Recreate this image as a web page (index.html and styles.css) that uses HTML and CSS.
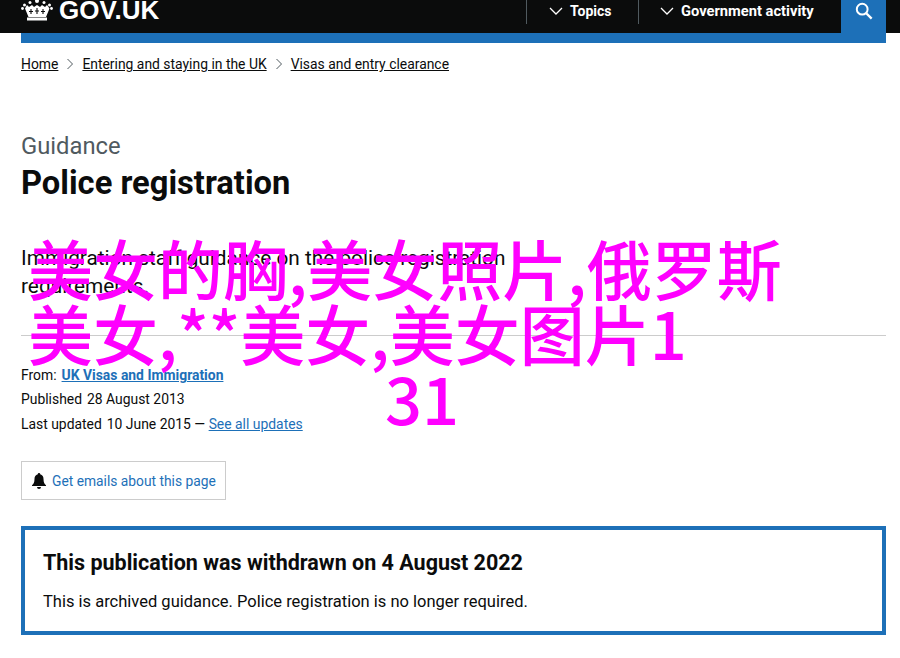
FILE: index.html
```html
<!DOCTYPE html>
<html lang="en">
<head>
<meta charset="utf-8">
<title>Police registration - GOV.UK</title>
<link rel="stylesheet" href="styles.css">
</head>
<body>
<header class="header">
  <a class="logo" href="#">
    <svg class="crown" viewBox="0 0 32 22" aria-hidden="true">
      <g fill="#fff">
        <circle cx="16" cy="2" r="2"/><circle cx="9" cy="3.5" r="1.5"/><circle cx="23" cy="3.5" r="1.5"/>
        <circle cx="3.5" cy="6" r="1.5"/><circle cx="28.5" cy="6" r="1.5"/><circle cx="1.5" cy="9.5" r="1.4"/><circle cx="30.5" cy="9.5" r="1.4"/>
        <path d="M6 6l2 2 3-2 2 2 3-2 3 2 2-2 3 2 2-2 2.500 3.500-3.500 8.500H7.500L4 9.500z"/>
        <rect x="6" y="18.500" width="20" height="3"/>
      </g>
      <g fill="none" stroke="#0b0c0c" stroke-width="1.100">
        <path d="M10 10v5M8 12.500h4M16 9v6M14 12h4M22 10v5M20 12.500h4"/>
      </g>
    </svg>
    <span class="logo-text">GOV.UK</span>
  </a>
  <nav class="nav">
    <a class="nav-item nav-topics" href="#">
      <svg class="chevron" viewBox="0 0 14 8" aria-hidden="true"><path d="M1 1l6 6 6-6" fill="none" stroke="#fff" stroke-width="1.300"/></svg>
      Topics
    </a>
    <a class="nav-item nav-gov" href="#">
      <svg class="chevron" viewBox="0 0 14 8" aria-hidden="true"><path d="M1 1l6 6 6-6" fill="none" stroke="#fff" stroke-width="1.300"/></svg>
      Government activity
    </a>
    <button class="search" aria-label="Search">
      <svg class="search-icon" viewBox="0 0 20 20" aria-hidden="true"><circle cx="8" cy="8" r="6" fill="none" stroke="#fff" stroke-width="2.200"/><path d="M12.500 12.500l6 6" stroke="#fff" stroke-width="2.600"/></svg>
    </button>
  </nav>
</header>
<div class="blue-bar"></div>
<main class="main">
  <nav class="crumbs">
    <a href="#">Home</a>
    <svg class="crumb-sep" viewBox="0 0 8 12" aria-hidden="true"><path d="M1.500 1l5 5-5 5" fill="none" stroke="#505a5f" stroke-width="1"/></svg>
    <a href="#">Entering and staying in the UK</a>
    <svg class="crumb-sep" viewBox="0 0 8 12" aria-hidden="true"><path d="M1.500 1l5 5-5 5" fill="none" stroke="#505a5f" stroke-width="1"/></svg>
    <a href="#">Visas and entry clearance</a>
  </nav>
  <p class="caption">Guidance</p>
  <h1 class="title">Police registration</h1>
  <p class="lead">Immigration staff guidance on the police registration requirements.</p>
  <hr class="rule">
  <dl class="meta">
    <div class="meta-row"><dt>From:</dt><dd><a class="strong-link" href="#">UK Visas and Immigration</a></dd></div>
    <div class="meta-row"><dt>Published</dt><dd>28 August 2013</dd></div>
    <div class="meta-row"><dt>Last updated</dt><dd>10 June 2015 — <a class="blue-link" href="#">See all updates</a></dd></div>
  </dl>
  <a class="email-btn" href="#">
    <svg class="bell" viewBox="0 0 14 16" aria-hidden="true"><path d="M7 0a1.200 1.200 0 0 1 1.200 1.300C10.500 1.900 11.500 3.800 11.500 6c0 3.500 1 4.800 2.500 6.200V13H0v-.8C1.500 10.800 2.500 9.500 2.500 6c0-2.200 1-4.100 3.300-4.700A1.200 1.200 0 0 1 7 0zM5 14h4a2 2 0 0 1-4 0z" fill="#0b0c0c"/></svg>
    <span class="email-label">Get emails about this page</span>
  </a>
  <section class="notice">
    <h2 class="notice-title">This publication was withdrawn on 4 August 2022</h2>
    <p class="notice-text">This is archived guidance. Police registration is no longer required.</p>
  </section>
</main>
<div class="overlay">
  <div class="overlay-line">美女的胸,美女照片,俄罗斯</div>
  <div class="overlay-line">美女,**美女,美女图片1</div>
  <div class="overlay-line overlay-center">31</div>
</div>
</body>
</html>
```
FILE: styles.css
```css
* { box-sizing: border-box; }
html, body { margin: 0; padding: 0; }
body {
  position: relative;
  height: 658px;
  overflow: hidden;
  background: #fff;
  color: #0b0c0c;
  font-family: Roboto, "Noto Sans", "Liberation Sans", sans-serif;
  font-size: 14px;
}
a { color: inherit; }

.header {
  display: flex;
  justify-content: space-between;
  height: 33px;
  padding: 0 14px 0 21px;
  background: #0b0c0c;
  overflow: hidden;
}
.logo {
  display: flex;
  align-items: flex-start;
  gap: 6px;
  color: #fff;
  text-decoration: none;
}
.crown { width: 32px; height: 22px; margin-top: -1px; }
.logo-text {
  margin-top: -8px;
  font-family: "Liberation Sans", sans-serif;
  font-size: 26px;
  line-height: 36px;
  font-weight: 700;
}
.nav { display: flex; }
.nav-item {
  display: flex;
  align-items: center;
  gap: 7px;
  height: 24px;
  padding-bottom: 2px;
  border-left: 1px solid #505a5f;
  color: #fff;
  font-size: 14px;
  font-weight: 700;
  text-decoration: none;
}
.nav-topics { width: 112px; padding-left: 22px; }
.nav-gov { width: 203px; padding-left: 21px; font-size: 14.700px; }
.chevron { width: 14px; height: 8px; }
.search {
  display: flex;
  align-items: center;
  justify-content: center;
  width: 45px;
  height: 33px;
  padding: 0 0 12px;
  border: 0;
  background: #1d70b8;
}
.search-icon { width: 18px; height: 18px; }

.blue-bar {
  height: 10px;
  margin: 0 14px 0 21px;
  background: #1d70b8;
}

.main { padding: 0 14px 0 21px; }
.crumbs {
  display: flex;
  align-items: center;
  gap: 8px;
  margin-top: 11px;
  font-size: 13.900px;
  line-height: 20px;
}
.crumb-sep { width: 8px; height: 12px; }

.caption {
  margin: 56px 0 0;
  color: #505a5f;
  font-size: 23.800px;
  line-height: 32px;
}
.title {
  margin: 1px 0 0;
  font-size: 32.700px;
  line-height: 40px;
  font-weight: 700;
}
.lead {
  width: 560px;
  margin: 41px 0 0;
  font-size: 20.800px;
  line-height: 28px;
}
.rule {
  margin: 35px 0 0;
  border: 0;
  border-top: 1px solid #ccc;
}
.meta { margin: 27px 0 0; font-size: 13.900px; }
.meta-row {
  display: flex;
  gap: 5px;
  line-height: 24.400px;
  color: #0b0c0c;
}
.meta-row dd { margin: 0; }
.strong-link { color: #1d70b8; font-weight: 700; }
.blue-link { color: #1d70b8; }

.email-btn {
  display: inline-flex;
  align-items: center;
  gap: 6px;
  width: 205px;
  height: 39px;
  margin-top: 25px;
  padding-left: 10px;
  border: 1px solid #ccc;
  color: #1d70b8;
  text-decoration: none;
}
.email-label { white-space: nowrap; font-size: 13.800px; }
.bell { width: 14px; height: 16px; }

.notice {
  margin-top: 26px;
  height: 109px;
  padding: 20px 18px 0;
  border: 4px solid #1d70b8;
}
.notice-title {
  margin: 0;
  font-size: 21.500px;
  line-height: 26px;
  font-weight: 700;
}
.notice-text {
  margin: 14px 0 0;
  font-size: 16.500px;
  line-height: 24px;
}

.overlay {
  position: absolute;
  top: 235px;
  left: 28px;
  width: 788px;
  color: #f0f;
  font-family: "Noto Sans CJK SC", "Noto Sans", sans-serif;
  font-size: 65px;
  font-weight: 500;
  line-height: 65px;
  font-kerning: none;
}
.overlay-line { white-space: nowrap; }
.overlay-center { text-align: center; }
```
